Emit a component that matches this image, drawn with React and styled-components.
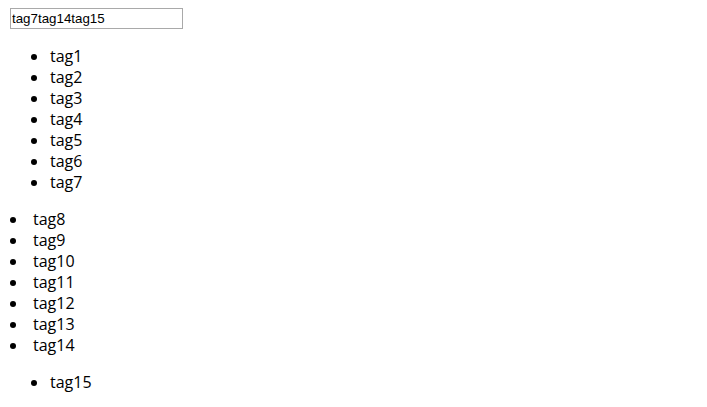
import styled, { createGlobalStyle } from "styled-components";

const GlobalStyle = createGlobalStyle`
  body {
    margin: 0;
    background: #fff;
    color: #000;
    font-family: "Open Sans", "Noto Sans", sans-serif;
  }
`;

const groups = [
  { indent: 21, gap: 13, tags: ["tag1", "tag2", "tag3", "tag4", "tag5", "tag6", "tag7"] },
  { indent: 0, gap: 17, tags: ["tag8", "tag9", "tag10", "tag11", "tag12", "tag13", "tag14"] },
  { indent: 21, gap: 13, tags: ["tag15"] },
];

export default function App() {
  return (
    <>
      <GlobalStyle />
      <Page>
        <Header>
          <TagInput type="text" defaultValue="tag7tag14tag15" />
        </Header>
        {groups.map((group, i) => (
          <TagList key={i} $indent={group.indent}>
            {group.tags.map((tag) => (
              <Item key={tag}>
                <Bullet $gap={group.gap} />
                {tag}
              </Item>
            ))}
          </TagList>
        ))}
      </Page>
    </>
  );
}

const Page = styled.div`
  padding: 8px 10px;
`;

const Header = styled.div`
  height: 22px;
`;

const TagInput = styled.input`
  box-sizing: border-box;
  display: block;
  width: 173px;
  height: 21px;
  margin: 0;
  padding: 0 1px;
  border: 1px solid #a9a9a9;
  font-family: "Liberation Sans", Arial, sans-serif;
  font-size: 13.33px;
  color: #000;
  outline: none;
`;

const TagList = styled.ul`
  list-style: none;
  margin: 16px 0;
  padding: 0 0 0 ${(p) => p.$indent}px;
`;

const Item = styled.li`
  display: flex;
  align-items: center;
  height: 21px;
  font-size: 16px;
  line-height: 21px;
`;

const Bullet = styled.span`
  flex: none;
  width: 6px;
  height: 6px;
  margin-right: ${(p) => p.$gap}px;
  border-radius: 50%;
  background: #000;
`;
